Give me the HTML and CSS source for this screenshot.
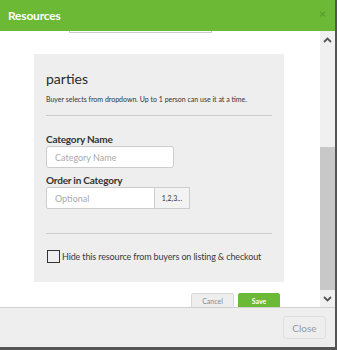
FILE: index.html
```html
<html>

<head>
    <meta charset="UTF-8">
    <meta name="viewport" content="width=device-width, initial-scale=1.0">
    <title>Resources</title>

    <link rel="stylesheet" href="styles.css">
</head>

<body>
    <div class="modal">
        <div class="modal-header">
            <span class="modal-title">Resources</span>
            <span class="modal-close">&times;</span>
        </div>

        <div class="modal-body">
            <div class="content">
                <div class="prev-input"></div>

                <div class="resource-panel">
                    <h3 class="resource-name">parties</h3>
                    <p class="resource-desc">Buyer selects from dropdown. Up to 1 person can use it at a time.</p>
                    <hr class="divider" />

                    <label class="field-label" for="category-name">Category Name</label>
                    <input type="text" class="input input-name" id="category-name" placeholder="Category Name" />

                    <label class="field-label" for="category-order">Order in Category</label>
                    <div class="input-group">
                        <input type="text" class="input input-order" id="category-order" placeholder="Optional" />
                        <span class="input-addon">1,2,3...</span>
                    </div>

                    <hr class="divider divider-bottom" />

                    <label class="check-row">
                        <span class="checkbox"></span>
                        <span>Hide this resource from buyers on listing &amp; checkout</span>
                    </label>
                </div>

                <div class="panel-actions">
                    <button type="button" class="btn btn-cancel">Cancel</button>
                    <button type="button" class="btn btn-save">Save</button>
                </div>
            </div>

            <div class="scrollbar">
                <span class="scroll-arrow">
                    <svg width="9" height="6" viewBox="0 0 9 6"><path d="M1 5 L4.5 1.5 L8 5" fill="none" stroke="#555" stroke-width="1.8" /></svg>
                </span>
                <div class="scroll-track">
                    <div class="scroll-thumb"></div>
                </div>
                <span class="scroll-arrow">
                    <svg width="9" height="6" viewBox="0 0 9 6"><path d="M1 1 L4.5 4.5 L8 1" fill="none" stroke="#555" stroke-width="1.8" /></svg>
                </span>
            </div>
        </div>

        <div class="modal-footer">
            <button type="button" class="btn btn-close">Close</button>
        </div>
    </div>
</body>

</html>
```

FILE: styles.css
```css
:root {
    --green: #6cb936;
    --green-dark: #5a9e2c;
    --panel-bg: #eeeeee;
    --border: #cccccc;
    --text-color: #333333;
    --placeholder: #aaaaaa;
}

body {
    margin: 0;
    width: 337px;
    height: 350px;
    overflow: hidden;
    background: #555555;
    font-family: Lato, "Open Sans", sans-serif;
    color: var(--text-color);
}

.modal {
    width: 335px;
    height: 347px;
    background: white;
    display: flex;
    flex-direction: column;
}

.modal-header {
    height: 31px;
    flex-shrink: 0;
    background: var(--green);
    display: flex;
    align-items: center;
    justify-content: space-between;
    padding: 0 9px 0 8px;
}

.modal-title {
    color: white;
    font-weight: bold;
    font-size: 12px;
    letter-spacing: -0.2px;
}

.modal-close {
    color: var(--green-dark);
    font-size: 12px;
    font-weight: bold;
    margin-top: -4px;
}

.modal-body {
    flex: 1;
    display: flex;
    min-height: 0;
}

.content {
    flex: 1;
    overflow: hidden;
}

.prev-input {
    width: 141px;
    height: 1px;
    margin-left: 69px;
    border: 1px solid var(--border);
    border-top: none;
}

.resource-panel {
    width: 226px;
    margin: 21px 0 0 34px;
    padding: 12px 12px 19px 12px;
    background: var(--panel-bg);
}

.resource-name {
    margin: 4px 0 0 0;
    font-size: 14px;
    font-weight: normal;
    line-height: 18px;
    color: #2a2a2a;
}

.resource-desc {
    margin: 6px 0 0 0;
    font-size: 7px;
    line-height: 10px;
}

.divider {
    border: none;
    border-top: 1px solid var(--border);
    margin: 11px 0 16px 0;
}

.divider-bottom {
    margin: 24px 0 16px 0;
}

.field-label {
    display: block;
    font-size: 10px;
    font-weight: bold;
    line-height: 14px;
    letter-spacing: -0.2px;
}

.input {
    display: block;
    height: 22px;
    box-sizing: border-box;
    border: 1px solid var(--border);
    background: white;
    padding: 0 8px;
    font-family: inherit;
    font-size: 9px;
    color: var(--text-color);
    margin: 0;
}

.input::placeholder {
    color: var(--placeholder);
}

.input-name {
    width: 128px;
    border-radius: 3px;
    margin: 0 0 5px 0;
}

.input-group {
    display: flex;
}

.input-order {
    width: 109px;
    border-radius: 2px 0 0 2px;
}

.input-addon {
    height: 22px;
    box-sizing: border-box;
    width: 35px;
    border: 1px solid var(--border);
    border-left: none;
    background: #f3f3f3;
    font-size: 7px;
    display: flex;
    align-items: center;
    justify-content: center;
}

.check-row {
    display: flex;
    align-items: center;
    font-size: 9px;
    letter-spacing: -0.14px;
    white-space: nowrap;
    color: #3a3a3a;
}

.checkbox {
    width: 11px;
    height: 11px;
    flex-shrink: 0;
    border: 1px solid #333333;
    margin: 0 2px 0 1px;
}

.panel-actions {
    display: flex;
    justify-content: flex-end;
    gap: 4px;
    width: 250px;
    margin: 11px 0 0 34px;
    padding-right: 4px;
    box-sizing: border-box;
}

.btn {
    cursor: pointer;
    font-family: inherit;
    border-radius: 2px;
    height: 22px;
    padding: 0;
}

.btn-cancel {
    width: 43px;
    background: #eeeeee;
    border: 1px solid #d8d8d8;
    color: #888888;
    font-size: 7px;
    padding-bottom: 6px;
}

.btn-save {
    width: 42px;
    background: var(--green);
    border: 1px solid var(--green);
    color: white;
    font-size: 7px;
    font-weight: bold;
    padding-bottom: 6px;
}

.scrollbar {
    width: 15px;
    flex-shrink: 0;
    background: #f0f0f0;
    display: flex;
    flex-direction: column;
}

.scroll-arrow {
    height: 17px;
    display: flex;
    align-items: center;
    justify-content: center;
}

.scroll-track {
    flex: 1;
    display: flex;
    flex-direction: column;
    justify-content: flex-end;
}

.scroll-thumb {
    height: 143px;
    background: #c8c8c8;
}

.modal-footer {
    height: 39px;
    flex-shrink: 0;
    border-top: 1px solid #d0d0d0;
    background: #eeeeee;
    display: flex;
    align-items: center;
    justify-content: flex-end;
    padding-right: 9px;
}

.btn-close {
    width: 43px;
    height: 23px;
    background: #eeeeee;
    border: 1px solid #dddddd;
    border-radius: 3px;
    color: #999999;
    font-size: 10px;
}
```
